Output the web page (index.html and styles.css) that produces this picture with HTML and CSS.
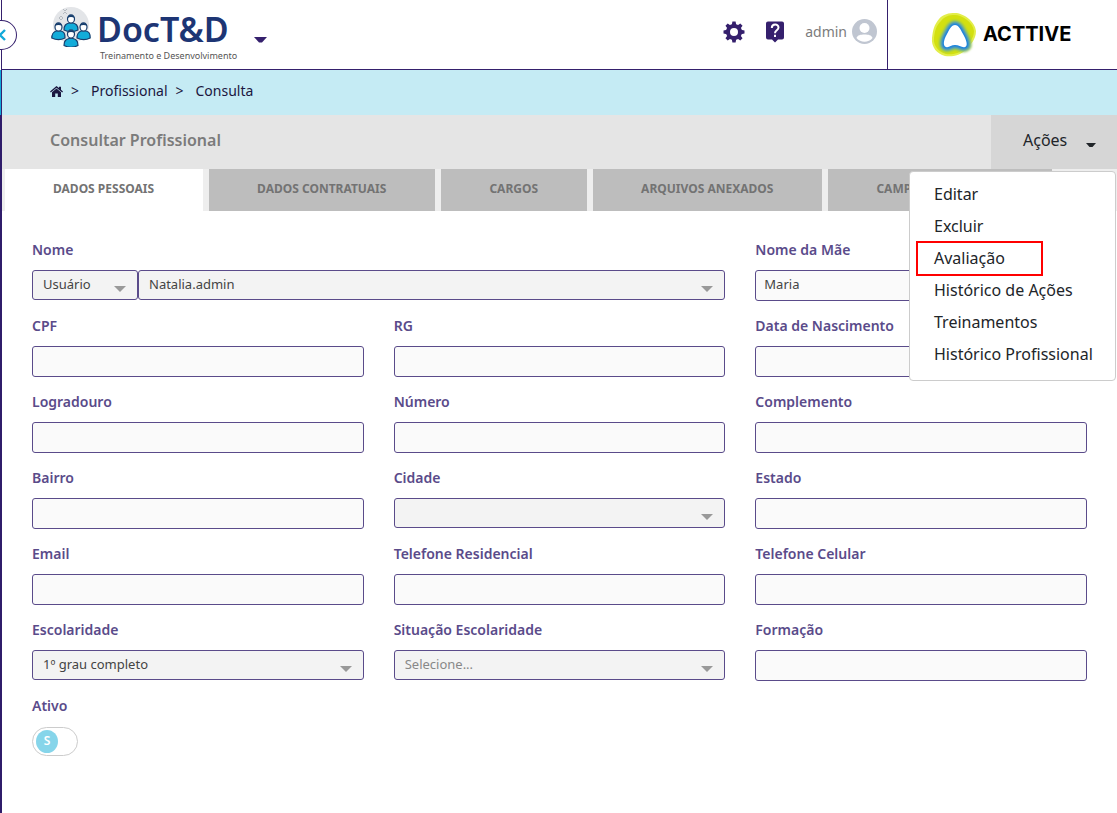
FILE: index.html
```html
<!DOCTYPE html>
<html lang="pt-BR">
<head>
<meta charset="utf-8">
<meta name="viewport" content="width=device-width, initial-scale=1">
<title>DocT&amp;D - Consultar Profissional</title>
<link rel="stylesheet" href="styles.css">
</head>
<body>
<header class="header">
  <button class="rail-toggle" type="button" aria-label="Abrir menu"><svg width="10" height="12" viewBox="0 0 10 12"><path d="M8 1 3 6l5 5" fill="none" stroke="#12a9d9" stroke-width="2.400"/></svg></button>
  <div class="brand">
    <svg class="brand-icon" width="40" height="40" viewBox="0 0 40 40" aria-hidden="true">
      <circle cx="20" cy="18" r="18" fill="#e3e5e8"/>
      <g fill="none" stroke="#b5bac0" stroke-width="1"><path d="M12 2l2 2m2-2-2 2m-2 3 2-2m2 2-2-2"/><path d="M10 9l2 2-2 2-2-2z"/></g>
      <g stroke="#173e6d" stroke-width="1.200">
        <path d="M13 23c0-5 2-6 5-7h4c3 1 5 2 5 7-4 2-10 2-14 0z" fill="#12acd9"/>
        <ellipse cx="20" cy="12" rx="3.500" ry="4.200" fill="#fff"/>
        <path d="M.8 31c0-5 2-6 4.200-7h5c3 1 4 2 4 7-4 2-9 2-13.200 0z" fill="#12acd9"/>
        <ellipse cx="7.500" cy="20" rx="3.500" ry="4.200" fill="#fff"/>
        <path d="M26 31c0-5 2-6 4-7h5c3 1 4.200 2 4.200 7-4 2-9 2-13.200 0z" fill="#12acd9"/>
        <ellipse cx="32.500" cy="20" rx="3.500" ry="4.200" fill="#fff"/>
        <path d="M13 38.500c0-5 2-6 5-7h4c3 1 5 2 5 7-4 2-10 2-14 0z" fill="#12acd9"/>
        <ellipse cx="20" cy="27" rx="3.500" ry="4.200" fill="#fff"/>
      </g>
      <path d="M16.500 11c0-4 7-4 7 0-2-1.500-5-1.500-7 0zM4 19c0-4 7-4 7 0-2-1.500-5-1.500-7 0zM29 19c0-4 7-4 7 0-2-1.500-5-1.500-7 0zM16.500 26c0-4 7-4 7 0-2-1.500-5-1.500-7 0z" fill="#173e6d"/>
    </svg>
    <div class="brand-text">
      <span class="brand-name">DocT&amp;D</span>
      <span class="brand-tag">Treinamento e Desenvolvimento</span>
    </div>
    <button class="brand-menu" type="button" aria-label="Trocar módulo"><svg width="13" height="6" viewBox="0 0 13 6"><path d="M0 0h13L8 5.500H5z" fill="#35206d"/></svg></button>
  </div>
  <div class="tools">
    <button class="icon-button" type="button" aria-label="Configurações"><svg width="22" height="22" viewBox="0 0 22 22"><g fill="#35206d"><path d="M8.800 4 9.400.5h3.200l.6 3.500zM8.800 18l.6 3.500h3.200l.6-3.500zM4 8.800.5 9.400v3.200l3.500.6zM18 8.800l3.500.6v3.200l-3.500.6z"/><path transform="rotate(45 11 11)" d="M8.800 4 9.400.5h3.200l.6 3.500zM8.800 18l.6 3.500h3.200l.6-3.500zM4 8.800.5 9.400v3.200l3.500.6zM18 8.800l3.500.6v3.200l-3.500.6z"/></g><circle cx="11" cy="11" r="6" fill="none" stroke="#35206d" stroke-width="4"/></svg></button>
    <button class="icon-button" type="button" aria-label="Ajuda"><svg width="20" height="22" viewBox="0 0 20 22"><path d="M3 .5h14a2 2 0 0 1 2 2v14a2 2 0 0 1-2 2h-4l-3 3-3-3H3a2 2 0 0 1-2-2v-14a2 2 0 0 1 2-2z" fill="#35206d"/><path d="M6.800 7c0-4.600 6.700-4.600 6.700-.4 0 2.800-3.500 2.700-3.500 5.700" fill="none" stroke="#fff" stroke-width="2"/><path d="M9 13.800h2v2.200H9z" fill="#fff"/></svg></button>
    <a class="user" href="#perfil"><span>admin</span><svg width="25" height="25" viewBox="0 0 25 25"><circle cx="12.500" cy="12.500" r="12.500" fill="#c0c6d1"/><circle cx="12.500" cy="9" r="5" fill="#fff"/><path d="M4.500 19c1-3 4-3.500 8-3.500s7 .5 8 3.500c-4 5-12 5-16 0z" fill="#fff"/></svg></a>
  </div>
  <div class="company">
    <svg width="48" height="46" viewBox="0 0 48 46" aria-hidden="true">
      <defs>
        <path id="delta" d="M25 14c-3 0-5 3-8 9-4 7-4 12-1 13 3 1 5-2 9-2s7 3 10 2c3-1 2-6-2-13-3-6-5-9-8-9z"/>
        <filter id="soft" x="-50%" y="-50%" width="200%" height="200%"><feGaussianBlur stdDeviation="1.200"/></filter>
      </defs>
      <path d="M25 2c8 0 20 8 21 18 0 9-6 14-10 18-5 7-15 8-21 7C7 43 1 36 2 27c1-8 2-13 7-19 4-5 10-6 16-6z" fill="#e3ee4a"/>
      <path d="M25 4c7 0 18 7 19 16 0 8-6 13-10 17-4 6-13 7-18 6C9 41 3 35 4 27c1-8 2-12 7-17 4-5 8-6 14-6z" fill="#d3e010"/>
      <g filter="url(#soft)" stroke-linejoin="round">
        <use href="#delta" fill="#9cc94a" stroke="#9cc94a" stroke-width="10"/>
        <use href="#delta" fill="#4fa5a0" stroke="#4fa5a0" stroke-width="7"/>
        <use href="#delta" fill="#1681e0" stroke="#1681e0" stroke-width="4"/>
      </g>
      <use href="#delta" fill="#fff"/>
    </svg>
    <span class="company-name">ACTTIVE</span>
  </div>
</header>

<nav class="crumbs" aria-label="Trilha">
  <a href="#inicio" aria-label="Início"><svg width="13" height="11" viewBox="0 0 13 11"><path d="M6.500 2.500 11 6.300V11H7.800V7.500H5.200V11H2V6.300zM6.500 0 9 2V.8h2v3L13 5.500l-.8 1L6.500 1.800.8 6.500 0 5.500z" fill="#1b1740"/></svg></a>
  <span class="sep">&gt;</span><a href="#profissional">Profissional</a><span class="sep">&gt;</span><span>Consulta</span>
</nav>

<main class="main">
  <div class="titlebar">
    <h1>Consultar Profissional</h1>
    <div class="actions">
      <button class="actions-button" type="button" aria-expanded="true" aria-controls="menu">Ações<svg width="10" height="5" viewBox="0 0 10 5"><path d="M0 0h10L6.500 4h-3z" fill="#212529"/></svg></button>
      <ul class="menu" id="menu">
        <li><a href="#editar">Editar</a></li>
        <li><a href="#excluir">Excluir</a></li>
        <li class="marked"><a href="#avaliacao">Avaliação</a></li>
        <li><a href="#acoes">Histórico de Ações</a></li>
        <li><a href="#treinamentos">Treinamentos</a></li>
        <li><a href="#historico">Histórico Profissional</a></li>
      </ul>
    </div>
  </div>

  <div class="tabs" role="tablist">
    <button class="tab active" type="button" role="tab" aria-selected="true">DADOS PESSOAIS</button>
    <button class="tab" type="button" role="tab">DADOS CONTRATUAIS</button>
    <button class="tab" type="button" role="tab">CARGOS</button>
    <button class="tab" type="button" role="tab">ARQUIVOS ANEXADOS</button>
    <button class="tab" type="button" role="tab">CAMPOS ADICIONAIS</button>
  </div>

  <form class="form">
    <div class="field wide">
      <label for="nome">Nome</label>
      <div class="pair">
        <div class="select"><select aria-label="Tipo"><option>Usuário</option></select></div>
        <div class="select"><select id="nome"><option>Natalia.admin</option></select></div>
      </div>
    </div>
    <div class="field"><label for="mae">Nome da Mãe</label><input id="mae" type="text" value="Maria"></div>
    <div class="field"><label for="cpf">CPF</label><input id="cpf" type="text"></div>
    <div class="field"><label for="rg">RG</label><input id="rg" type="text"></div>
    <div class="field"><label for="nasc">Data de Nascimento</label><input id="nasc" type="text"></div>
    <div class="field"><label for="logr">Logradouro</label><input id="logr" type="text"></div>
    <div class="field"><label for="num">Número</label><input id="num" type="text"></div>
    <div class="field"><label for="comp">Complemento</label><input id="comp" type="text"></div>
    <div class="field"><label for="bairro">Bairro</label><input id="bairro" type="text"></div>
    <div class="field"><label for="cidade">Cidade</label><div class="select"><select id="cidade"><option></option></select></div></div>
    <div class="field"><label for="estado">Estado</label><input id="estado" type="text"></div>
    <div class="field"><label for="email">Email</label><input id="email" type="text"></div>
    <div class="field"><label for="telr">Telefone Residencial</label><input id="telr" type="text"></div>
    <div class="field"><label for="telc">Telefone Celular</label><input id="telc" type="text"></div>
    <div class="field"><label for="esc">Escolaridade</label><div class="select"><select id="esc"><option>1º grau completo</option></select></div></div>
    <div class="field"><label for="sit">Situação Escolaridade</label><div class="select"><select id="sit" class="empty"><option>Selecione...</option></select></div></div>
    <div class="field"><label for="form">Formação</label><input id="form" type="text"></div>
    <div class="field"><label for="ativo">Ativo</label><div class="switch"><input id="ativo" type="checkbox" checked><span class="knob" aria-hidden="true">S</span></div></div>
  </form>
</main>
</body>
</html>
```
FILE: styles.css
```css
* { box-sizing: border-box; }
body {
  display: flex;
  flex-direction: column;
  margin: 0;
  min-height: 100vh;
  background: #fff;
  color: #212529;
  font: 14px/20px "Noto Sans", sans-serif;
  overflow-x: hidden;
}
a { color: inherit; text-decoration: none; }
button { border: 0; padding: 0; background: none; color: inherit; font: inherit; }
svg { display: block; flex: none; }

.header {
  position: relative;
  display: flex;
  height: 70px;
  margin-left: 1px;
  border-left: 1px solid #35206d;
  border-bottom: 1px solid #35206d;
  background: #fff;
}
.rail-toggle {
  position: absolute;
  left: -16px;
  top: 20px;
  width: 31px;
  height: 30px;
  padding-left: 10px;
  border: 1px solid #35206d;
  border-radius: 50%;
  background: #fff;
}
.brand { display: flex; flex: 1; align-items: flex-start; padding: 7px 0 0 49px; }
.brand-text { display: flex; flex-direction: column; margin-left: 6px; }
.brand-name { color: #1d3574; font-size: 34px; font-weight: 600; line-height: 44px; }
.brand-tag { padding-left: 3px; color: #555; font-size: 9px; line-height: 10px; }
.brand-menu { margin: 30px 0 0 17px; }
.tools { display: flex; align-items: center; gap: 20px; padding: 0 10px 6px 0; }
.user { display: flex; align-items: center; gap: 5px; color: #7c7c7c; }
.company {
  display: flex;
  align-items: center;
  gap: 5px;
  width: 230px;
  padding: 0 0 1px 42px;
  border-left: 1px solid #35206d;
}
.company-name { color: #000; font: 700 20px/24px Inter, sans-serif; }

.crumbs {
  display: flex;
  align-items: center;
  height: 45px;
  margin-left: 1px;
  padding: 0 0 3px 48px;
  border-left: 1px solid #35206d;
  box-shadow: -1px 0 #12a9d9;
  background: #c5ebf4;
  color: #1b1740;
}
.sep { padding: 0 12px 0 8px; }

.main { flex: 1; border-left: 2px solid #2f1c6a; }
.titlebar {
  position: relative;
  display: flex;
  align-items: stretch;
  justify-content: space-between;
  height: 54px;
  padding-left: 48px;
  background: #e5e5e5;
}
h1 { margin: 0; color: #7b7b7b; font-size: 16px; font-weight: 600; line-height: 50px; }
.actions { width: 126px; background: #d6d6d6; }
.actions-button {
  display: flex;
  align-items: center;
  width: 100%;
  gap: 19px;
  padding-left: 32px;
  font-size: 16px;
  line-height: 50px;
}
.actions-button svg { margin-top: 10px; }
.menu {
  position: absolute;
  z-index: 2;
  top: 56px;
  right: 1px;
  width: 207px;
  margin: 0;
  padding: 6px 22px 10px 24px;
  border: 1px solid #ccc;
  border-radius: 4px;
  background: #fff;
  list-style: none;
  font-size: 16px;
  line-height: 32px;
  white-space: nowrap;
}
.menu li { position: relative; }
.marked::after {
  content: "";
  position: absolute;
  inset: -1px 50px -2px -18px;
  border: 2px solid #f00;
  pointer-events: none;
}

.tabs { display: flex; gap: 6px; padding-left: 3px; background: #eee; }
.tab {
  height: 42px;
  padding: 0 49px 2px 48px;
  background: #bdbdbd;
  color: #737373;
  font-size: 12px;
  font-weight: 700;
  white-space: nowrap;
}
.tab.active { background: #fff; }

.form {
  display: grid;
  grid-template-columns: repeat(3, minmax(0, 1fr));
  gap: 14px 30px;
  padding: 29px 30px;
}
.field { display: flex; flex-direction: column; gap: 10px; height: 62px; }
.wide { grid-column: span 2; }
.field label { color: #5a4b8a; font-weight: 600; line-height: 20px; }
.pair { display: grid; grid-template-columns: 106px 1fr; }
.field input[type="text"], .select select {
  width: 100%;
  height: 31px;
  padding: 0 8px 3px;
  border: 1px solid #5a4b8a;
  border-radius: 3px;
  background: #fafafa;
  color: #444;
  font: 13px/20px "Noto Sans", sans-serif;
}
.select { position: relative; }
.select select { display: block; appearance: none; height: 30px; padding: 0 30px 2px 10px; background: #f3f3f3; }
.select .empty { color: #888; }
.select::after {
  content: "";
  position: absolute;
  right: 12px;
  top: 16px;
  border: 6px solid transparent;
  border-top-color: #999;
  border-bottom: 0;
  pointer-events: none;
}
.switch { position: relative; width: 46px; height: 29px; margin-top: 1px; }
.switch input {
  display: block;
  width: 46px;
  height: 29px;
  margin: 0;
  appearance: none;
  border: 1px solid #ccc;
  border-radius: 15px;
  background: #fff;
}
.knob {
  position: absolute;
  left: 4px;
  top: 3px;
  width: 22px;
  height: 23px;
  border-radius: 50%;
  background: #86d5ea;
  color: #fff;
  font-size: 12px;
  font-weight: 600;
  line-height: 22px;
  text-align: center;
  pointer-events: none;
}
```
